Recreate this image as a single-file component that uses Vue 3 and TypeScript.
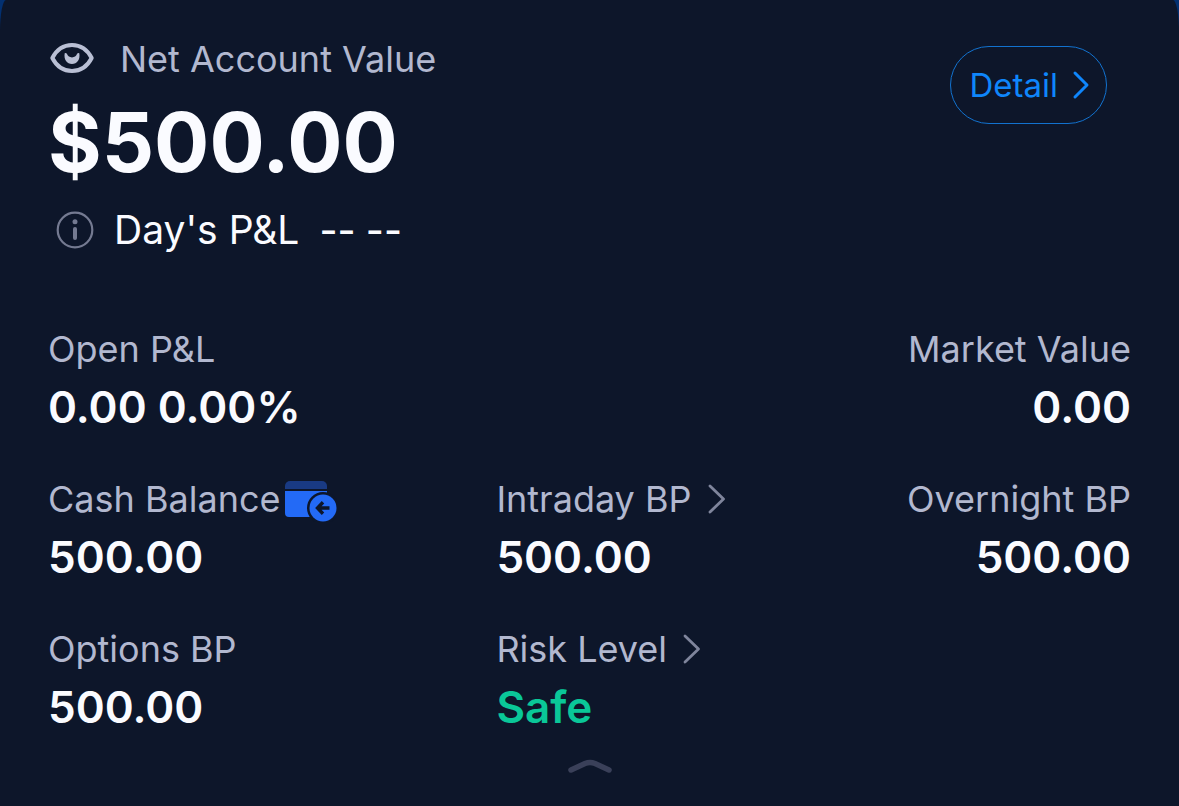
<script setup lang="ts">
interface Metric {
  label: string
  value: string
  align?: 'end'
  link?: boolean
  wallet?: boolean
  safe?: boolean
  wide?: boolean
}

const metrics: Metric[] = [
  { label: 'Open P&L', value: '0.00 0.00%', wide: true },
  { label: 'Market Value', value: '0.00', align: 'end' },
  { label: 'Cash Balance', value: '500.00', wallet: true },
  { label: 'Intraday BP', value: '500.00', link: true },
  { label: 'Overnight BP', value: '500.00', align: 'end' },
  { label: 'Options BP', value: '500.00' },
  { label: 'Risk Level', value: 'Safe', link: true, safe: true },
]
</script>

<template>
  <main class="card">
    <header class="top">
      <section class="summary">
        <div class="net">
          <button class="plain" type="button" aria-label="Hide balances">
            <svg width="44" height="34" viewBox="0 0 44 34" fill="none">
              <path d="M2.300 16C7 7 13.500 3 22 3s15 4 19.700 13C37 25 30.500 29 22 29S7 25 2.300 16Z" stroke="#b9bfd4" stroke-width="4" stroke-linejoin="round" />
              <path d="M14.700 11.200a1.800 1.800 0 0 1 2.300.9c1 2.200 2.500 3.300 5 3.300s4-1.100 5-3.300a1.800 1.800 0 0 1 2.300-.9c1.100 6.600-2.300 10.800-7.300 10.800s-8.400-4.200-7.300-10.800Z" fill="#b9bfd4" />
            </svg>
          </button>
          <h1 class="label">Net Account Value</h1>
        </div>
        <p class="total">$500.00</p>
        <div class="day">
          <button class="plain" type="button" aria-label="About day's profit and loss">
            <svg width="38" height="38" viewBox="0 0 38 38" fill="none">
              <circle cx="19" cy="19" r="17.300" stroke="#747a91" stroke-width="2.200" />
              <circle cx="19" cy="10.800" r="2.500" fill="#747a91" />
              <path d="M19 18v9" stroke="#747a91" stroke-width="4" stroke-linecap="round" />
            </svg>
          </button>
          <span>Day's P&amp;L</span>
          <span class="dashes">-- --</span>
        </div>
      </section>
      <button class="detail" type="button">
        Detail
        <svg width="18" height="30" viewBox="0 0 18 30" fill="none">
          <path d="M3 3l12 12L3 27" stroke="currentColor" stroke-width="3" stroke-linecap="round" stroke-linejoin="round" />
        </svg>
      </button>
    </header>

    <dl class="metrics">
      <div v-for="m in metrics" :key="m.label" :class="['metric', m.align, { wide: m.wide }]">
        <dt class="label">
          <button v-if="m.link" class="plain more" type="button">
            {{ m.label }}
            <svg width="18" height="32" viewBox="0 0 18 32" fill="none">
              <path d="M2 3l13.500 13L2 29" stroke="#7f859c" stroke-width="2.800" stroke-linecap="round" stroke-linejoin="round" />
            </svg>
          </button>
          <template v-else>{{ m.label }}</template>
          <button v-if="m.wallet" class="plain wallet" type="button" aria-label="Transfer cash">
            <svg width="52" height="42" viewBox="0 0 52 42" fill="none">
              <path d="M0 9V6a5 5 0 0 1 5-5h32a5 5 0 0 1 5 5v3Z" fill="#193a83" />
              <path d="M0 11h42v22a4 4 0 0 1-4 4H4a4 4 0 0 1-4-4Z" fill="#236af6" />
              <circle cx="38" cy="28" r="16" fill="#0d162a" />
              <circle cx="38" cy="28" r="13.500" fill="#236af6" />
              <path d="M44.500 28H33.500M38 22.300L32.500 28l5.500 5.700" stroke="#0d162a" stroke-width="3.400" />
            </svg>
          </button>
        </dt>
        <dd :class="['value', { safe: m.safe }]">{{ m.value }}</dd>
      </div>
    </dl>

    <button class="plain collapse" type="button" aria-label="Collapse">
      <svg width="44" height="16" viewBox="0 0 44 16" fill="none">
        <path d="M3 12L17 5.500q5-2 10 0L41 12" stroke="#3a4059" stroke-width="5.500" stroke-linecap="round" />
      </svg>
    </button>
  </main>
</template>

<style>
body {
  background: #033070;
}
</style>

<style scoped>
.card {
  box-sizing: border-box;
  min-height: 100vh;
  padding: 36px 48px 28px;
  border-radius: 6px 6px 0 0 / 32px 32px 0 0;
  background: #0d162a;
  color: #fafbff;
  font-family: Inter, "Liberation Sans", sans-serif;
}

.plain {
  display: flex;
  padding: 0;
  border: 0;
  background: none;
  color: inherit;
  font: inherit;
}

svg {
  display: block;
  flex: none;
}

.top {
  display: flex;
  justify-content: space-between;
  align-items: flex-start;
}

.net {
  display: flex;
  align-items: center;
  gap: 26px;
  margin-left: 2px;
}

.label {
  display: flex;
  align-items: center;
  margin: 0;
  color: #b2b8cf;
  font-size: 36px;
  font-weight: 400;
  line-height: 46px;
}

.total {
  margin: 9px 0 0;
  font-size: 82px;
  font-weight: 700;
  line-height: 104px;
}

.day {
  display: flex;
  align-items: center;
  margin: 11px 0 0 8px;
  font-size: 39px;
  line-height: 48px;
}

.day .plain {
  margin-right: 20px;
}

.dashes {
  margin-left: 20px;
  font-weight: 500;
}

.detail {
  display: flex;
  align-items: center;
  gap: 14px;
  height: 78px;
  margin: 10px 24px 0 0;
  padding: 0 16px 0 18px;
  border: 1px solid #1272cf;
  border-radius: 39px;
  background: none;
  color: #0f86fb;
  font: 400 33px Inter, "Liberation Sans", sans-serif;
}

.metrics {
  display: grid;
  grid-template-columns: 448fr 317fr 317fr;
  row-gap: 43px;
  margin: 72px 0 0;
}

.wide {
  grid-column: span 2;
}

.end {
  text-align: right;
}

.end .label {
  justify-content: flex-end;
}

.more {
  align-items: center;
  gap: 16px;
}

.wallet {
  margin: 4px 0 0 5px;
}

.value {
  margin: 9px 0 0;
  font-size: 44px;
  font-weight: 600;
  line-height: 52px;
}

.safe {
  color: #0ac798;
}

.collapse {
  margin: 25px auto 0;
}
</style>
